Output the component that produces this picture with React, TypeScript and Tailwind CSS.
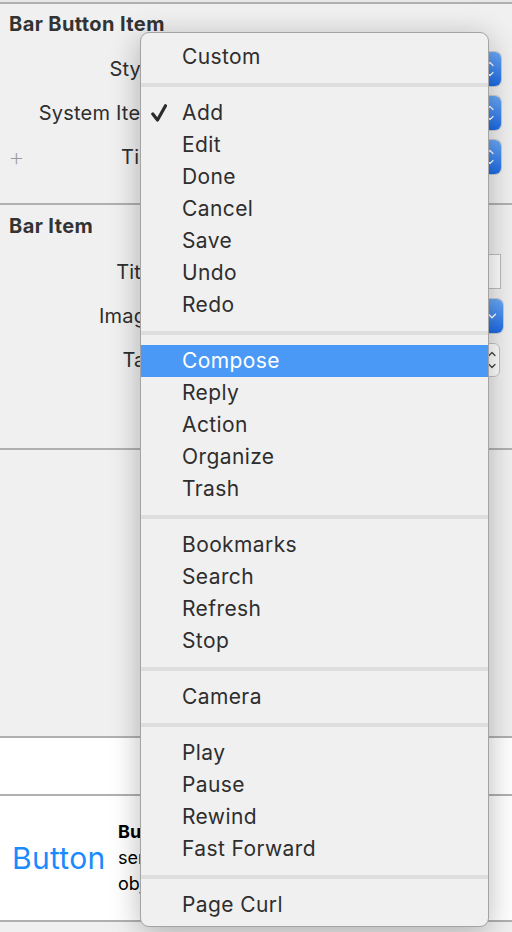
import { ChevronDown, ChevronUp } from 'lucide-react'

const groups: string[][] = [
  ['Custom'],
  ['Add', 'Edit', 'Done', 'Cancel', 'Save', 'Undo', 'Redo'],
  ['Compose', 'Reply', 'Action', 'Organize', 'Trash'],
  ['Bookmarks', 'Search', 'Refresh', 'Stop'],
  ['Camera'],
  ['Play', 'Pause', 'Rewind', 'Fast Forward'],
  ['Page Curl'],
]

function Check() {
  return (
    <svg width="16" height="18" viewBox="0 0 16 18" className="text-[#2b2b2b]">
      <polyline
        points="1.8,10 6.5,16 14.5,1.8"
        fill="none"
        stroke="currentColor"
        strokeWidth="3.2"
        strokeLinecap="round"
        strokeLinejoin="round"
      />
    </svg>
  )
}

function PopUp() {
  return (
    <div className="flex h-[34px] w-[335px] rounded-[6px] bg-white shadow-[0_0_0_1px_rgba(0,0,0,0.15)]">
      <div className="flex-1" />
      <div className="flex w-[22px] flex-col items-center justify-center rounded-[6px] bg-gradient-to-b from-[#69a8f7] to-[#1a6be6] text-white">
        <ChevronUp size={12} strokeWidth={2.5} className="-mb-[2px]" />
        <ChevronDown size={12} strokeWidth={2.5} />
      </div>
    </div>
  )
}

function Row({ label, children, plus }: { label: string; children: React.ReactNode; plus?: boolean }) {
  return (
    <div className="flex items-center">
      <div className="w-[30px] pl-[8px] text-[26px] font-extralight leading-none text-[#9a9a9a]">{plus ? '+' : ''}</div>
      <div className="w-[128px] text-right text-[20px] tracking-[0.2px] text-[#2e2e2e]">{label}</div>
      <div className="ml-[8px]">{children}</div>
    </div>
  )
}

export default function App() {
  return (
    <div
      className="relative h-[932px] w-[512px] overflow-hidden bg-[#f0f0f0]"
      style={{ fontFamily: 'Inter, "Noto Sans", sans-serif' }}
    >
      <div className="h-[2px] bg-[#e8e8e8]" />
      <div className="h-[2px] bg-[#b0b0b0]" />

      {/* Bar Button Item */}
      <section className="h-[199px] pt-[9px]">
        <h2 className="pl-[9px] text-[20px] font-bold leading-[22px] tracking-[0.4px] text-[#333]">Bar Button Item</h2>
        <div className="mt-[17px] flex flex-col gap-[10px]">
          <Row label="Style"><PopUp /></Row>
          <Row label="System Item"><PopUp /></Row>
          <Row label="Tint" plus><PopUp /></Row>
        </div>
      </section>
      <div className="h-[2px] bg-[#b0b0b0]" />

      {/* Bar Item */}
      <section className="h-[243px] pt-[10px]">
        <h2 className="pl-[9px] text-[20px] font-bold leading-[22px] tracking-[0.4px] text-[#333]">Bar Item</h2>
        <div className="mt-[17px] flex flex-col gap-[10px]">
          <Row label="Title">
            <div className="h-[35px] w-[335px] border border-[#bdbdbd] bg-white" />
          </Row>
          <Row label="Image">
            <div className="flex h-[34px] w-[337px] rounded-[6px] bg-white shadow-[0_0_0_1px_rgba(0,0,0,0.15)]">
              <div className="flex-1" />
              <div className="flex w-[22px] items-center justify-center rounded-[6px] bg-gradient-to-b from-[#69a8f7] to-[#1a6be6] text-white">
                <ChevronDown size={14} strokeWidth={2.5} />
              </div>
            </div>
          </Row>
          <Row label="Tag">
            <div className="flex h-[34px] w-[334px] gap-[6px]">
              <div className="h-full flex-1 border border-[#bdbdbd] bg-white" />
              <div className="flex w-[16px] flex-col items-center justify-center rounded-[6px] border border-[#c4c4c4] bg-white text-[#444]">
                <ChevronUp size={12} strokeWidth={2.5} />
                <ChevronDown size={12} strokeWidth={2.5} />
              </div>
            </div>
          </Row>
        </div>
      </section>
      <div className="h-[2px] bg-[#b0b0b0]" />

      <section className="h-[286px]" />
      <div className="h-[2px] bg-[#b0b0b0]" />
      <section className="h-[56px] bg-white" />
      <div className="h-[2px] bg-[#b0b0b0]" />

      {/* Object library entry */}
      <section className="flex h-[124px] items-center bg-white">
        <div className="w-[118px] pl-[12px] text-[30px] tracking-[0.3px] text-[#1a8aff]">Button</div>
        <div className="text-[18px] leading-[26px] text-black">
          <div className="font-bold">Button</div>
          <div>sends an action</div>
          <div>object when tapped</div>
        </div>
      </section>
      <div className="h-[2px] bg-[#b0b0b0]" />

      {/* Pop-up menu */}
      <div className="absolute left-[140px] top-[32px] h-[895px] w-[349px] rounded-[9px] border border-[#a4a4a4] bg-[#f0f0f0] pb-[6px] pt-[8px] shadow-[0_6px_30px_rgba(0,0,0,0.28)]">
        {groups.map((g, gi) => (
          <div key={gi}>
            {gi > 0 && (
              <div className="py-[10px]">
                <div className="h-[4px] bg-[#dedede]" />
              </div>
            )}
            {g.map((item) => {
              const active = item === 'Compose'
              return (
                <div
                  key={item}
                  className={[
                    'flex h-[32px] items-center text-[21px] tracking-[0.4px]',
                    active ? 'bg-[#4b99f7] text-white' : 'text-[#2e2e2e]',
                  ].join(' ')}
                >
                  <div className="flex w-[41px] justify-end pr-[15px]">{item === 'Add' && <Check />}</div>
                  <span>{item}</span>
                </div>
              )
            })}
          </div>
        ))}
      </div>
    </div>
  )
}
